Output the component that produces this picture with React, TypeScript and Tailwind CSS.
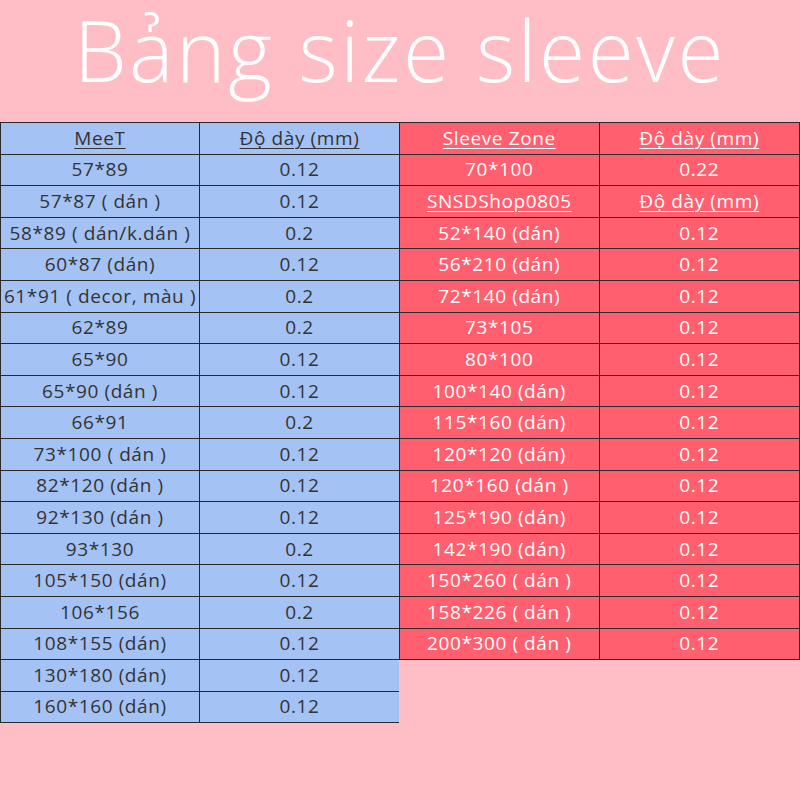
import React from "react";

const left: [string, string][] = [
  ["57*89", "0.12"],
  ["57*87 ( dán )", "0.12"],
  ["58*89 ( dán/k.dán )", "0.2"],
  ["60*87 (dán)", "0.12"],
  ["61*91 ( decor, màu )", "0.2"],
  ["62*89", "0.2"],
  ["65*90", "0.12"],
  ["65*90 (dán )", "0.12"],
  ["66*91", "0.2"],
  ["73*100 ( dán )", "0.12"],
  ["82*120 (dán )", "0.12"],
  ["92*130 (dán )", "0.12"],
  ["93*130", "0.2"],
  ["105*150 (dán)", "0.12"],
  ["106*156", "0.2"],
  ["108*155 (dán)", "0.12"],
  ["130*180 (dán)", "0.12"],
  ["160*160 (dán)", "0.12"],
];

const right: [string, string][] = [
  ["52*140 (dán)", "0.12"],
  ["56*210 (dán)", "0.12"],
  ["72*140 (dán)", "0.12"],
  ["73*105", "0.12"],
  ["80*100", "0.12"],
  ["100*140 (dán)", "0.12"],
  ["115*160 (dán)", "0.12"],
  ["120*120 (dán)", "0.12"],
  ["120*160 (dán )", "0.12"],
  ["125*190 (dán)", "0.12"],
  ["142*190 (dán)", "0.12"],
  ["150*260 ( dán )", "0.12"],
  ["158*226 ( dán )", "0.12"],
  ["200*300 ( dán )", "0.12"],
];

function Row({ a, b, head }: { a: string; b: string; head?: boolean }) {
  const cell =
    "flex items-center justify-center h-[31.6px] border-b border-[#2a2a2a] text-[19px] leading-none tracking-[0.6px] " +
    (head ? "underline underline-offset-[3px] decoration-1 font-medium " : "");
  return (
    <div className="flex">
      <div className={cell + "w-1/2 border-r border-[#2a2a2a]"}>{a}</div>
      <div className={cell + "w-1/2"}>{b}</div>
    </div>
  );
}

export default function App() {
  return (
    <div
      className="w-[800px] h-[800px] bg-[#ffbec6] overflow-hidden"
      style={{ fontFamily: "'Open Sans', 'Noto Sans', sans-serif" }}
    >
      <div className="h-[122px] flex items-start justify-center">
        <div className="text-white text-[84px] font-light leading-[1.2] tracking-[2.5px]">
          Bảng size sleeve
        </div>
      </div>
      <div className="flex items-start">
        <div className="w-[399px] bg-[#a4c2f4] text-[#333] border-l border-t border-[#2a2a2a]">
          <Row a="MeeT" b="Độ dày (mm)" head />
          {left.map(([a, b], i) => (
            <Row key={i} a={a} b={b} />
          ))}
        </div>
        <div className="w-[401px] bg-[#ff5f6e] text-white border-l border-t border-r border-[#2a2a2a]">
          <Row a="Sleeve Zone" b="Độ dày (mm)" head />
          <Row a="70*100" b="0.22" />
          <Row a="SNSDShop0805" b="Độ dày (mm)" head />
          {right.map(([a, b], i) => (
            <Row key={i} a={a} b={b} />
          ))}
        </div>
      </div>
    </div>
  );
}
